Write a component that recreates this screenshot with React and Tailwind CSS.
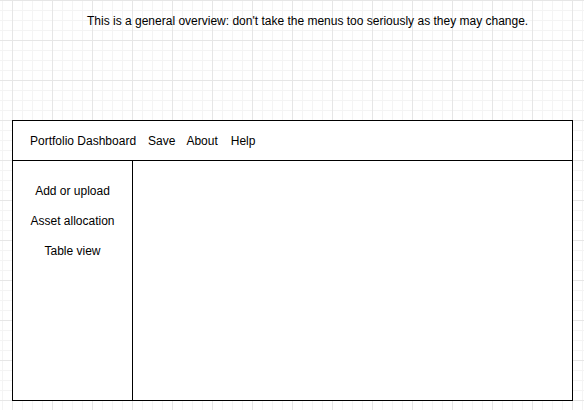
import React from 'react';

const menuItems = ['Save', 'About', 'Help'];
const sideItems = ['Add or upload', 'Asset allocation', 'Table view'];

const App = () => {
  return (
    <div
      className="w-[584px] h-[410px] overflow-hidden bg-white text-[12px] text-black font-['Liberation_Sans',Arial,sans-serif] bg-[linear-gradient(to_right,#e6e6e6_1px,transparent_1px),linear-gradient(to_bottom,#e6e6e6_1px,transparent_1px),linear-gradient(to_right,#f4f4f4_1px,transparent_1px),linear-gradient(to_bottom,#f4f4f4_1px,transparent_1px)] bg-[size:40px_40px,40px_40px,10px_10px,10px_10px] bg-[position:12px_0px,0px_0px,2px_0px,0px_0px]"
    >
      {/* Note */}
      <div className="pt-[14px] pl-[87px] leading-[14px] h-[120px]">
        This is a general overview: don't take the menus too seriously as they may change.
      </div>

      {/* Mockup frame */}
      <div className="ml-[12px] w-[561px] h-[281px] border border-black bg-white flex flex-col">
        <div className="h-[40px] border-b border-black flex items-center pl-[17px] leading-[14px]">
          <span>Portfolio Dashboard</span>
          <div className="flex ml-[12px]">
            {menuItems.map((item, i) => (
              <span key={item} className={i === 0 ? '' : i === 1 ? 'ml-[11px]' : 'ml-[13px]'}>
                {item}
              </span>
            ))}
          </div>
        </div>
        <div className="flex-1 flex">
          <div className="w-[120px] border-r border-black flex flex-col items-center pt-[23px] gap-[16px] leading-[14px]">
            {sideItems.map((item) => (
              <span key={item}>{item}</span>
            ))}
          </div>
          <div className="flex-1" />
        </div>
      </div>
    </div>
  );
};

export default App;
